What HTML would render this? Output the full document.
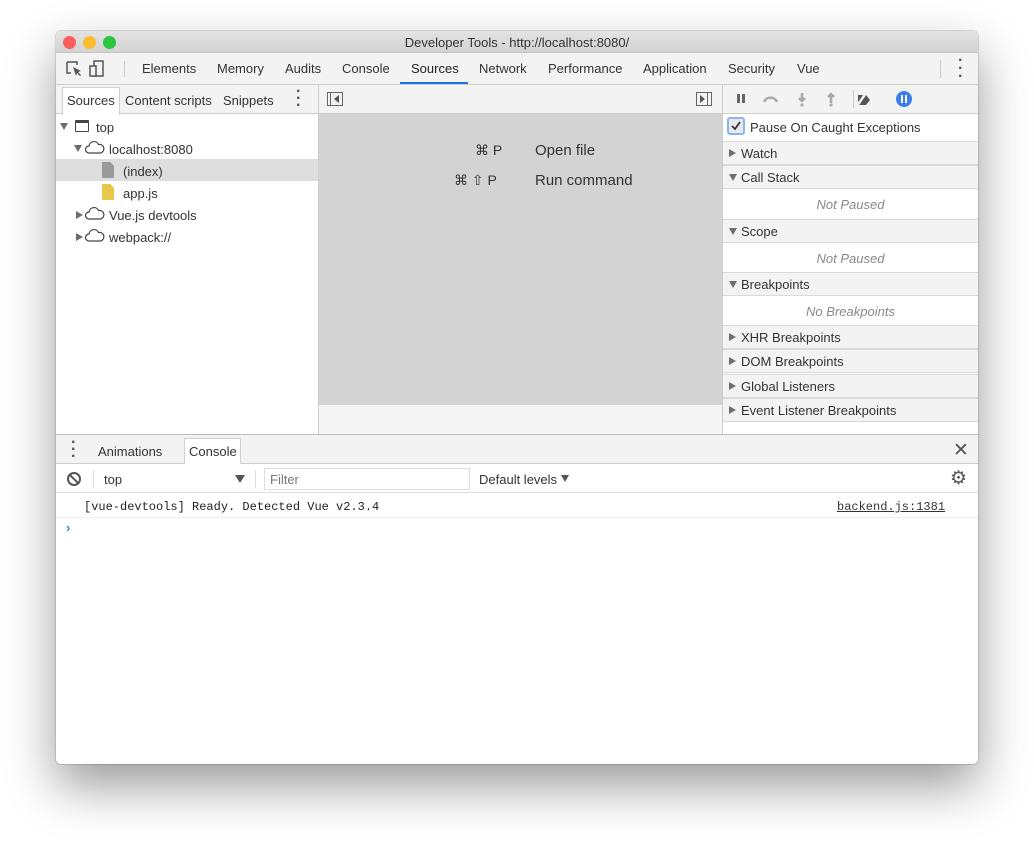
<!DOCTYPE html>
<html><head><meta charset="utf-8"><style>
*{box-sizing:border-box;margin:0;padding:0}
body{width:1034px;height:844px;background:#fff;position:relative;font-family:"Liberation Sans",sans-serif;font-size:13px;color:#333;overflow:hidden}
.a{position:absolute}
#win{left:56px;top:31px;width:922px;height:733px;background:#fff;border-radius:5px;overflow:hidden;box-shadow:0 22px 50px rgba(0,0,0,.4),0 0 0 1px rgba(0,0,0,.12)}
.t{position:absolute;white-space:nowrap}
.hdr{position:absolute;left:0;width:255px;height:24px;background:#f3f3f3;border-bottom:1px solid #dadada;border-top:1px solid #dadada}
.hdr span{position:absolute;left:18px;top:4px}
.tri{position:absolute;left:6px;top:8px;width:0;height:0;border-left:4px solid transparent;border-right:4px solid transparent;border-top:7px solid #6e6e6e}
.trr{position:absolute;left:6px;top:7px;width:0;height:0;border-top:4px solid transparent;border-bottom:4px solid transparent;border-left:7px solid #6e6e6e}
.np{position:absolute;left:0;width:255px;text-align:center;font-style:italic;color:#888;font-size:13px}
</style></head><body>
<div class="a" id="win">
 <div class="a" style="left:0;top:0;width:922px;height:22px;background:linear-gradient(#e3e3e3,#d3d3d3);border-bottom:1px solid #c4c4c4"></div>
 <div class="a" style="left:7px;top:5px;width:13px;height:13px;border-radius:50%;background:#fc5f57"></div>
 <div class="a" style="left:27px;top:5px;width:13px;height:13px;border-radius:50%;background:#fdbc2e"></div>
 <div class="a" style="left:47px;top:5px;width:13px;height:13px;border-radius:50%;background:#29c840"></div>
 <div class="t" style="left:0;width:922px;text-align:center;top:4px;color:#333;font-size:13px">Developer Tools - http://localhost:8080/</div>
 <div class="a" style="left:0;top:22px;width:922px;height:32px;background:#f3f3f3;border-bottom:1px solid #cdcdcd"></div>
 <svg class="a" style="left:10px;top:29px" width="40" height="18"><path d="M1 2h10v3M1 2v11h4" fill="none" stroke="#555" stroke-width="1.5"/><path d="M7 7l8 4-3 1 3 3-1 1-3-3-1 3z" fill="#555"/><rect x="28" y="1" width="9" height="15" fill="none" stroke="#555" stroke-width="1.5"/><rect x="24" y="6" width="6" height="10" fill="#f3f3f3" stroke="#555" stroke-width="1.5"/></svg>
 <div class="a" style="left:68px;top:30px;width:1px;height:16px;background:#ccc"></div>
 <div class="t" style="left:86px;top:30px">Elements</div>
 <div class="t" style="left:161px;top:30px">Memory</div>
 <div class="t" style="left:229px;top:30px">Audits</div>
 <div class="t" style="left:286px;top:30px">Console</div>
 <div class="t" style="left:355px;top:30px;color:#222">Sources</div>
 <div class="a" style="left:344px;top:51px;width:68px;height:2px;background:#1a73e8"></div>
 <div class="t" style="left:423px;top:30px">Network</div>
 <div class="t" style="left:492px;top:30px">Performance</div>
 <div class="t" style="left:587px;top:30px">Application</div>
 <div class="t" style="left:672px;top:30px">Security</div>
 <div class="t" style="left:741px;top:30px">Vue</div>
 <div class="a" style="left:884px;top:29px;width:1px;height:18px;background:#ccc"></div>
 <div class="t" style="left:902px;top:26px;font-size:16px;font-weight:bold;line-height:8px;color:#555">·<br>·<br>·</div>

 <div class="a" style="left:0;top:54px;width:262px;height:29px;background:#f3f3f3;border-bottom:1px solid #cdcdcd"></div>
 <div class="a" style="left:6px;top:56px;width:58px;height:28px;background:#fff;border:1px solid #d0d0d0;border-bottom:none"></div>
 <div class="t" style="left:11px;top:62px">Sources</div>
 <div class="t" style="left:69px;top:62px">Content scripts</div>
 <div class="t" style="left:167px;top:62px">Snippets</div>
 <div class="t" style="left:240px;top:57px;font-size:16px;font-weight:bold;line-height:7px;color:#555">·<br>·<br>·</div>
 <div class="a" style="left:262px;top:54px;width:1px;height:349px;background:#cdcdcd"></div>
 <div class="a" style="left:0;top:128px;width:262px;height:22px;background:#dedede"></div>
 <div class="a" style="left:4px;top:92px;border-left:4px solid transparent;border-right:4px solid transparent;border-top:7px solid #6e6e6e"></div>
 <div class="a" style="left:19px;top:89px;width:14px;height:12px;border:1.5px solid #444;border-top-width:3px;border-radius:1px"></div>
 <div class="t" style="left:40px;top:89px">top</div>
 <div class="a" style="left:18px;top:114px;border-left:4px solid transparent;border-right:4px solid transparent;border-top:7px solid #6e6e6e"></div>
 <svg class="a" style="left:29px;top:110px" width="20" height="13"><path d="M4 12a3.5 3.5 0 0 1 0-7 5 5 0 0 1 9.5-1.5A4.3 4.3 0 0 1 15.5 12z" fill="none" stroke="#444" stroke-width="1.2"/></svg>
 <div class="t" style="left:53px;top:111px">localhost:8080</div>
 <div class="a" style="left:46px;top:131px;width:12px;height:16px;background:#9a9a9a;clip-path:polygon(0 0,70% 0,100% 25%,100% 100%,0 100%)"></div>
 <div class="t" style="left:67px;top:133px">(index)</div>
 <div class="a" style="left:46px;top:153px;width:12px;height:16px;background:#e8c84a;clip-path:polygon(0 0,70% 0,100% 25%,100% 100%,0 100%)"></div>
 <div class="t" style="left:67px;top:155px">app.js</div>
 <div class="a" style="left:20px;top:180px;border-top:4px solid transparent;border-bottom:4px solid transparent;border-left:7px solid #6e6e6e"></div>
 <svg class="a" style="left:29px;top:176px" width="20" height="13"><path d="M4 12a3.5 3.5 0 0 1 0-7 5 5 0 0 1 9.5-1.5A4.3 4.3 0 0 1 15.5 12z" fill="none" stroke="#444" stroke-width="1.2"/></svg>
 <div class="t" style="left:53px;top:177px">Vue.js devtools</div>
 <div class="a" style="left:20px;top:202px;border-top:4px solid transparent;border-bottom:4px solid transparent;border-left:7px solid #6e6e6e"></div>
 <svg class="a" style="left:29px;top:198px" width="20" height="13"><path d="M4 12a3.5 3.5 0 0 1 0-7 5 5 0 0 1 9.5-1.5A4.3 4.3 0 0 1 15.5 12z" fill="none" stroke="#444" stroke-width="1.2"/></svg>
 <div class="t" style="left:53px;top:199px">webpack://</div>

 <div class="a" style="left:263px;top:54px;width:403px;height:29px;background:#f3f3f3;border-bottom:1px solid #cdcdcd"></div>
 <div class="a" style="left:271px;top:61px;width:16px;height:14px;border:1px solid #666"></div>
 <div class="a" style="left:274px;top:61px;width:1px;height:14px;background:#666"></div>
 <div class="a" style="left:278px;top:64px;border-top:4px solid transparent;border-bottom:4px solid transparent;border-right:5px solid #555"></div>
 <div class="a" style="left:640px;top:61px;width:16px;height:14px;border:1px solid #666"></div>
 <div class="a" style="left:651px;top:61px;width:1px;height:14px;background:#666"></div>
 <div class="a" style="left:644px;top:64px;border-top:4px solid transparent;border-bottom:4px solid transparent;border-left:5px solid #555"></div>
 <div class="a" style="left:263px;top:83px;width:403px;height:291px;background:#d3d3d3"></div>
 <div class="a" style="left:263px;top:374px;width:403px;height:29px;background:#f5f5f5"></div>
 <div class="t" style="left:419px;top:111px;font-size:14px;color:#333">⌘ P</div>
 <div class="t" style="left:479px;top:111px;font-size:15px;color:#333">Open file</div>
 <div class="t" style="left:398px;top:141px;font-size:14px;color:#333">⌘ ⇧ P</div>
 <div class="t" style="left:479px;top:141px;font-size:15px;color:#333">Run command</div>
 <div class="a" style="left:666px;top:54px;width:1px;height:349px;background:#cdcdcd"></div>

 <div class="a" style="left:667px;top:54px;width:255px;height:349px;background:#fff"></div>
 <div class="a" style="left:667px;top:54px;width:255px;height:29px;background:#f3f3f3;border-bottom:1px solid #cdcdcd"></div>
 <div class="a" style="left:681px;top:63px;width:3px;height:9px;background:#666"></div>
 <div class="a" style="left:686px;top:63px;width:3px;height:9px;background:#666"></div>
 <svg class="a" style="left:706px;top:60px" width="110" height="16"><path d="M2 11a7 7 0 0 1 13 0" fill="none" stroke="#aaa" stroke-width="2.5"/><path d="M40 2v7M37 7l3 3 3-3" fill="none" stroke="#aaa" stroke-width="2.5"/><circle cx="40" cy="14" r="1.6" fill="#aaa"/><path d="M69 12V5M66 6l3-3 3 3" fill="none" stroke="#aaa" stroke-width="2.5"/><circle cx="69" cy="14" r="1.6" fill="#aaa"/><path d="M96 4h8l4 5-4 5h-8z" fill="#555"/><path d="M95 15l9-13" stroke="#f3f3f3" stroke-width="2.5"/></svg>
 <div class="a" style="left:797px;top:59px;width:1px;height:18px;background:#ccc"></div>
 <div class="a" style="left:840px;top:60px;width:16px;height:16px;border-radius:50%;background:#3a7ee8"></div>
 <div class="a" style="left:845px;top:64px;width:2px;height:8px;background:#fff"></div>
 <div class="a" style="left:849px;top:64px;width:2px;height:8px;background:#fff"></div>
 <div class="a" style="left:671px;top:86px;width:18px;height:18px;border:2px solid #8ab4f0;border-radius:3px;background:#e9e9e9"></div>
 <svg class="a" style="left:675px;top:90px" width="10" height="10"><path d="M1 5l3 3 5-7" fill="none" stroke="#333" stroke-width="1.8"/></svg>
 <div class="t" style="left:694px;top:89px">Pause On Caught Exceptions</div>
 <div style="position:absolute;left:667px;top:0">
  <div class="hdr" style="top:110px"><i class="trr"></i><span>Watch</span></div>
  <div class="hdr" style="top:134px"><i class="tri"></i><span>Call Stack</span></div>
  <div class="np" style="top:166px">Not Paused</div>
  <div class="hdr" style="top:188px"><i class="tri"></i><span>Scope</span></div>
  <div class="np" style="top:220px">Not Paused</div>
  <div class="hdr" style="top:241px"><i class="tri"></i><span>Breakpoints</span></div>
  <div class="np" style="top:273px">No Breakpoints</div>
  <div class="hdr" style="top:294px"><i class="trr"></i><span>XHR Breakpoints</span></div>
  <div class="hdr" style="top:318px"><i class="trr"></i><span>DOM Breakpoints</span></div>
  <div class="hdr" style="top:343px"><i class="trr"></i><span>Global Listeners</span></div>
  <div class="hdr" style="top:367px"><i class="trr"></i><span>Event Listener Breakpoints</span></div>
 </div>

 <div class="a" style="left:0;top:403px;width:922px;height:30px;background:#f3f3f3;border-top:1px solid #bdbdbd;border-bottom:1px solid #cdcdcd"></div>
 <div class="t" style="left:15px;top:408px;font-size:16px;font-weight:bold;line-height:7px;color:#555">·<br>·<br>·</div>
 <div class="t" style="left:42px;top:413px">Animations</div>
 <div class="a" style="left:128px;top:407px;width:57px;height:27px;background:#fff;border:1px solid #d0d0d0;border-bottom:none"></div>
 <div class="t" style="left:133px;top:413px">Console</div>
 <div class="t" style="left:897px;top:408px;font-size:19px;color:#555">✕</div>
 <div class="a" style="left:0;top:433px;width:922px;height:29px;background:#fff;border-bottom:1px solid #e0e0e0"></div>
 <div class="a" style="left:11px;top:441px;width:14px;height:14px;border:2px solid #555;border-radius:50%"></div>
 <div class="a" style="left:17px;top:441px;width:2px;height:14px;background:#555;transform:rotate(-45deg)"></div>
 <div class="a" style="left:37px;top:439px;width:1px;height:18px;background:#ddd"></div>
 <div class="t" style="left:48px;top:441px">top</div>
 <div class="a" style="left:179px;top:444px;border-left:5px solid transparent;border-right:5px solid transparent;border-top:8px solid #555"></div>
 <div class="a" style="left:199px;top:439px;width:1px;height:18px;background:#ddd"></div>
 <div class="a" style="left:208px;top:437px;width:206px;height:22px;border:1px solid #ddd"></div>
 <div class="t" style="left:214px;top:441px;color:#777">Filter</div>
 <div class="t" style="left:423px;top:441px">Default levels</div>
 <div class="a" style="left:505px;top:444px;border-left:4px solid transparent;border-right:4px solid transparent;border-top:7px solid #555"></div>
 <div class="t" style="left:894px;top:436px;font-size:19px;color:#555">⚙</div>
 <div class="a" style="left:0;top:486px;width:922px;height:1px;background:#eee"></div>
 <div class="t" style="left:28px;top:469px;font-family:'Liberation Mono',monospace;font-size:12px;color:#222">[vue-devtools] Ready. Detected Vue v2.3.4</div>
 <div class="t" style="left:781px;top:469px;font-family:'Liberation Mono',monospace;font-size:12px;color:#333;text-decoration:underline">backend.js:1381</div>
 <div class="t" style="left:10px;top:489px;color:#3a7ee8;font-weight:bold;font-size:13px">›</div>
</div>
</body></html>
